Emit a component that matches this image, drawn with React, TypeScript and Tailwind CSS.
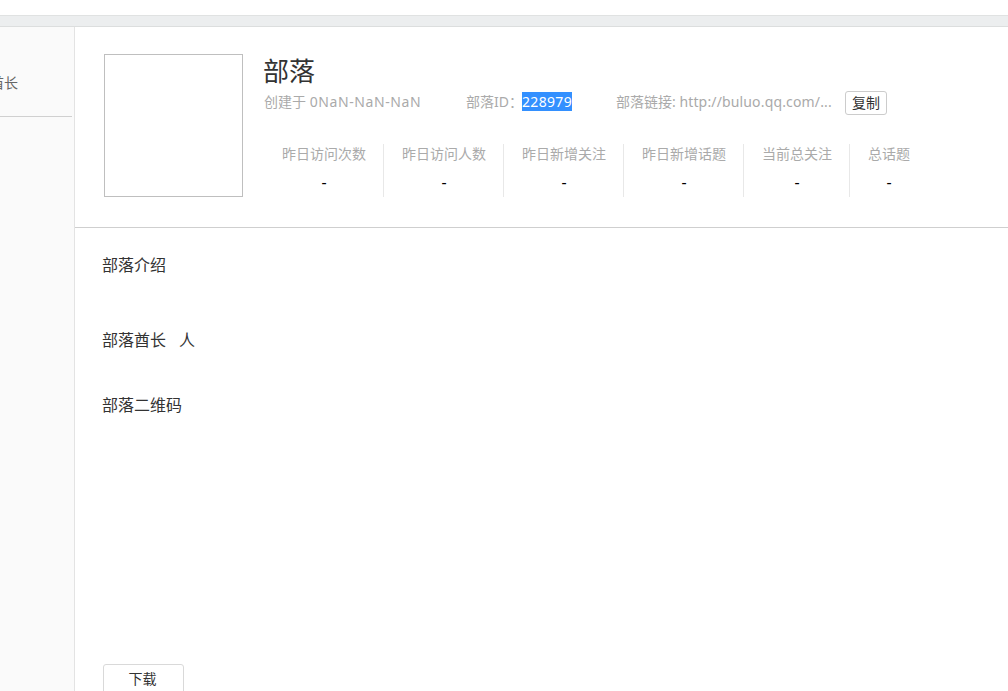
export default function App() {
  const stats = ["昨日访问次数", "昨日访问人数", "昨日新增关注", "昨日新增话题", "当前总关注", "总话题"];
  return (
    <div className="h-[691px] w-[1008px] overflow-hidden bg-white font-['Noto_Sans','Noto_Sans_CJK_SC',sans-serif] text-[14px] text-[#333]">
      <div className="h-4 border-b border-[#e0e2e2] bg-white" />
      <div className="h-[11px] border-b border-[#dcdede] bg-[#eceeef]" />
      <div className="flex h-[664px]">
        <aside className="w-[75px] shrink-0 border-r border-[#e3e3e3] bg-[#fafafa] pr-[2px]">
          <div className="flex h-[90px] items-center justify-end border-b border-[#d0d0d0] pr-[54px] pt-[23px] text-[14px] text-[#666]">
            <span className="whitespace-nowrap leading-5">酋长</span>
          </div>
        </aside>
        <main className="min-w-0 flex-1">
          <section className="flex h-[201px] border-b border-[#cfcfcf] pl-[29px] pt-[27px]">
            <div className="h-[143px] w-[139px] shrink-0 border border-[#bfbfbf]" />
            <div className="ml-[20px] min-w-0 flex-1">
              <h1 className="h-[34px] text-[26px] font-normal leading-[34px] text-[#333]">部落</h1>
              <div className="ml-px mt-px flex h-6 items-center whitespace-nowrap text-[14px] text-[#aaa]">
                <span className="w-[202px]">创建于 <span className="tracking-[0.6px]">0NaN-NaN-NaN</span></span>
                <span className="w-[150px]">
                  部落ID<span className="mr-[-1px]">：</span><span className="bg-[#3390ff] tracking-[0.33px] text-white">228979</span>
                </span>
                <span className="w-[229px]">部落链接: <span className="tracking-[0.15px]">http://buluo.qq.com/...</span></span>
                <button className="mt-[4px] h-6 w-[42px] rounded-[3px] border border-[#ccc] bg-white text-[14px] leading-[22px] text-[#333]">复制</button>
              </div>
              <div className="ml-px mt-[31px] flex">
                {stats.map((s, i) => (
                  <div key={s} className={i < stats.length - 1 ? "h-[53px] border-r border-[#e8e8e8] pl-[18px] pr-[17px] text-center" : "h-[53px] px-[18px] text-center"}>
                    <div className="h-5 whitespace-nowrap leading-5 text-[#aaa]">{s}</div>
                    <div className="mt-[8px] text-[16px] leading-5 text-black">-</div>
                  </div>
                ))}
              </div>
            </div>
          </section>
          <section className="pl-[27px] pt-[27px] text-[16px] leading-5 text-[#333]">
            <h2 className="font-normal">部落介绍</h2>
            <h2 className="mt-[55px] flex gap-[13px] font-normal"><span>部落酋长</span><span>人</span></h2>
            <h2 className="mt-[45px] font-normal">部落二维码</h2>
            <button className="ml-px mt-[249px] h-[30px] w-[81px] rounded-[3px] border border-[#d9d9d9] bg-white pr-[2px] text-[14px] text-[#333]">下载</button>
          </section>
        </main>
      </div>
    </div>
  );
}
